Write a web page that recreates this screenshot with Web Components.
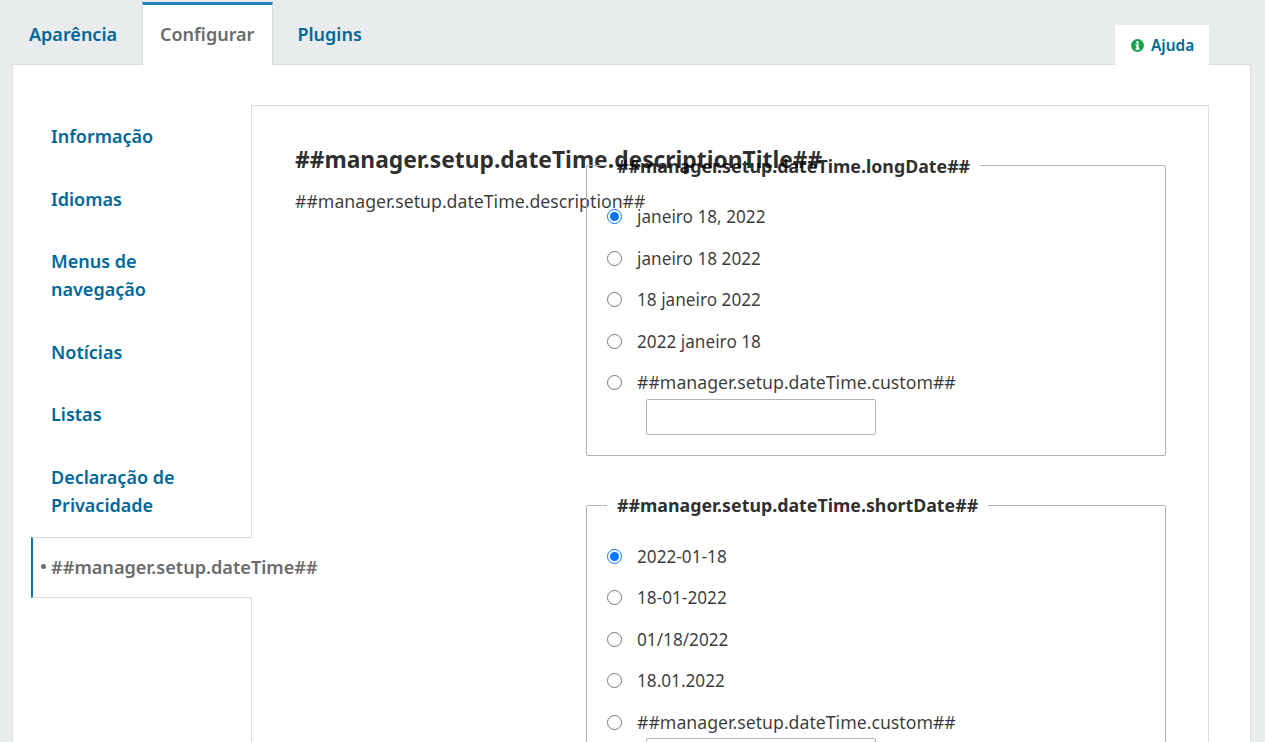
<!DOCTYPE html>
<html lang="pt">
<head>
<meta charset="utf-8">
<title>Configurar</title>
<style>
  html, body { margin: 0; height: 100%; overflow: hidden; }
  body { background: #e9eced; font-family: "Noto Sans", sans-serif; color: rgba(0,0,0,0.84); }
</style>
</head>
<body>
<settings-page>
  <top-tabs slot="tabs">
    <tab-link>Aparência</tab-link>
    <tab-link active>Configurar</tab-link>
    <tab-link>Plugins</tab-link>
    <help-tab slot="help">Ajuda</help-tab>
  </top-tabs>
  <side-nav slot="nav">
    <nav-link>Informação</nav-link>
    <nav-link>Idiomas</nav-link>
    <nav-link>Menus de<br>navegação</nav-link>
    <nav-link>Notícias</nav-link>
    <nav-link>Listas</nav-link>
    <nav-link>Declaração de<br>Privacidade</nav-link>
    <nav-link active>##manager.setup.dateTime##</nav-link>
  </side-nav>
  <form-panel slot="panel" heading="##manager.setup.dateTime.descriptionTitle##" description="##manager.setup.dateTime.description##">
    <date-fieldset legend="##manager.setup.dateTime.longDate##" options="janeiro 18, 2022|janeiro 18 2022|18 janeiro 2022|2022 janeiro 18"></date-fieldset>
    <date-fieldset legend="##manager.setup.dateTime.shortDate##" options="2022-01-18|18-01-2022|01/18/2022|18.01.2022"></date-fieldset>
  </form-panel>
</settings-page>

<script>
class SettingsPage extends HTMLElement {
  constructor() {
    super();
    this.shadowDOM = this.attachShadow({ mode: 'open' });
    this.shadowDOM.innerHTML = `
      <style>
        :host { display: block; height: 100vh; overflow: hidden; box-sizing: border-box; padding-top: 2px; }
        .card {
          margin: 0 14px 0 12px;
          background: #fff;
          border: 1px solid #ddd;
          border-bottom: 0;
          padding: 40px 41px 0 18px;
          display: flex;
          align-items: flex-start;
        }
      </style>
      <slot name="tabs"></slot>
      <div class="card">
        <slot name="nav"></slot>
        <slot name="panel"></slot>
      </div>
    `;
  }
}

class TopTabs extends HTMLElement {
  constructor() {
    super();
    this.shadowDOM = this.attachShadow({ mode: 'open' });
    this.shadowDOM.innerHTML = `
      <style>
        :host {
          display: flex;
          align-items: flex-end;
          gap: 7px;
          height: 63px;
          margin: 0 56px -1px 11px;
          position: relative;
          z-index: 2;
        }
        .help { margin-left: auto; display: flex; }
      </style>
      <slot></slot>
      <div class="help"><slot name="help"></slot></div>
    `;
  }
}

class TabLink extends HTMLElement {
  constructor() {
    super();
    this.shadowDOM = this.attachShadow({ mode: 'open' });
    this.shadowDOM.innerHTML = `
      <style>
        :host {
          display: block;
          box-sizing: border-box;
          height: 63px;
          padding: 18px 18px 0;
          font-size: 18px;
          line-height: 28px;
          font-weight: 600;
          color: #006798;
        }
        :host(:last-of-type) { margin-left: -1px; }
        :host([active]) {
          background: #fff;
          color: #6b6b6b;
          border: 1px solid #ddd;
          border-top: 3px solid #1e85c2;
          border-bottom: 0;
          padding: 15px 18px 0 17px;
        }
      </style>
      <slot></slot>
    `;
  }
}

class HelpTab extends HTMLElement {
  constructor() {
    super();
    this.shadowDOM = this.attachShadow({ mode: 'open' });
    this.shadowDOM.innerHTML = `
      <style>
        :host {
          display: flex;
          align-items: center;
          box-sizing: border-box;
          width: 94px;
          height: 40px;
          padding: 0 0 0 16px;
          background: #fff;
          border-radius: 2px 2px 0 0;
          font-size: 15.4px;
          font-weight: 600;
          color: #006798;
        }
        svg { width: 13px; height: 13px; margin-right: 7px; }
      </style>
      <svg viewBox="0 0 13 13" aria-hidden="true">
        <circle cx="6.5" cy="6.5" r="6.5" fill="#16a34a"/>
        <rect x="5.3" y="2.2" width="2.4" height="2.2" rx=".4" fill="#fff"/>
        <path d="M4.5 5.3h3.2v4.2h.9v1.2H4.5V9.5h.9V6.5h-.9z" fill="#fff"/>
      </svg>
      <slot></slot>
    `;
  }
}

class SideNav extends HTMLElement {
  constructor() {
    super();
    this.shadowDOM = this.attachShadow({ mode: 'open' });
    this.shadowDOM.innerHTML = `
      <style>
        :host {
          display: block;
          flex: 0 0 221px;
          width: 221px;
          margin-right: -1px;
          position: relative;
          z-index: 1;
        }
      </style>
      <slot></slot>
    `;
  }
}

class NavLink extends HTMLElement {
  constructor() {
    super();
    this.shadowDOM = this.attachShadow({ mode: 'open' });
    this.shadowDOM.innerHTML = `
      <style>
        :host {
          display: block;
          box-sizing: border-box;
          position: relative;
          padding: 17.25px 0 17.25px 20px;
          font-size: 18px;
          line-height: 28px;
          font-weight: 600;
          color: #006798;
          white-space: nowrap;
        }
        :host([active]) {
          background: #fff;
          color: #6b6b6b;
          height: 61px;
          margin-top: 0.5px;
          padding: 15px 0 16px 18px;
          font-size: 18.1px;
          border: 1px solid #ddd;
          border-left: 2px solid #0a78b0;
          border-right: 0;
        }
        :host([active])::before {
          content: "";
          position: absolute;
          left: 8px;
          top: 26px;
          width: 5px;
          height: 5px;
          border-radius: 50%;
          background: #6b6b6b;
        }
      </style>
      <slot></slot>
    `;
  }
}

class FormPanel extends HTMLElement {
  constructor() {
    super();
    this.shadowDOM = this.attachShadow({ mode: 'open' });
    this.shadowDOM.innerHTML = `
      <style>
        :host {
          display: flex;
          flex: 1;
          min-width: 0;
          box-sizing: border-box;
          min-height: 900px;
          border: 1px solid #ddd;
          border-bottom: 0;
          padding: 59px 42px 0 43px;
          background: #fff;
        }
        .intro { flex: 0 0 291px; width: 291px; margin-top: -22px; white-space: nowrap; }
        h2 { margin: 0 0 10px; font-size: 22.8px; line-height: 34px; font-weight: 700; color: rgba(0,0,0,0.84); }
        p { margin: 0; font-size: 17.7px; line-height: 28px; color: rgba(0,0,0,0.78); }
        .fields { flex: 1; min-width: 0; display: flex; flex-direction: column; gap: 48.75px; }
      </style>
      <div class="intro">
        <h2></h2>
        <p></p>
      </div>
      <div class="fields"><slot></slot></div>
    `;
  }

  connectedCallback() {
    this.shadowDOM.querySelector('h2').textContent = this.getAttribute('heading');
    this.shadowDOM.querySelector('p').textContent = this.getAttribute('description');
  }
}

class DateFieldset extends HTMLElement {
  constructor() {
    super();
    this.shadowDOM = this.attachShadow({ mode: 'open' });
  }

  connectedCallback() {
    const options = this.getAttribute('options').split('|');
    const group = this.getAttribute('legend');
    const rows = options.map((option, index) => `
      <label class="row date">
        <input type="radio" name="choice" ${index === 0 ? 'checked' : ''}>
        <span>${option}</span>
      </label>`).join('');
    this.shadowDOM.innerHTML = `
      <style>
        :host { display: block; }
        fieldset {
          margin: 0;
          padding: 29.75px 20px 20px 20px;
          border: 1px solid #b3b3b3;
          border-radius: 2px;
          height: 291px;
          box-sizing: border-box;
        }
        legend {
          margin-left: 0;
          padding: 0 10px;
          font-size: 17.8px;
          line-height: 0;
          height: 0;
          font-weight: 700;
          color: rgba(0,0,0,0.84);
        }
        .row {
          display: flex;
          align-items: center;
          height: 41.5px;
          font-size: 17.7px;
          color: rgba(0,0,0,0.78);
        }
        .row:not(.date) span { margin-bottom: 1px; }
        .date { font-size: 17.2px; }
        input[type=radio] { width: 15px; height: 15px; margin: 0 15px 0 0; flex: none; }
        input[type=text] {
          display: block;
          box-sizing: border-box;
          width: 230px;
          height: 36px;
          margin: -4.75px 0 0 39px;
          border: 1px solid #b3b3b3;
          border-radius: 2px;
          background: #fff;
        }
      </style>
      <fieldset>
        <legend>${group}</legend>
        ${rows}
        <label class="row">
          <input type="radio" name="choice">
          <span>##manager.setup.dateTime.custom##</span>
        </label>
        <input type="text">
      </fieldset>
    `;
  }
}

customElements.define('settings-page', SettingsPage);
customElements.define('top-tabs', TopTabs);
customElements.define('tab-link', TabLink);
customElements.define('help-tab', HelpTab);
customElements.define('side-nav', SideNav);
customElements.define('nav-link', NavLink);
customElements.define('form-panel', FormPanel);
customElements.define('date-fieldset', DateFieldset);
</script>
</body>
</html>
